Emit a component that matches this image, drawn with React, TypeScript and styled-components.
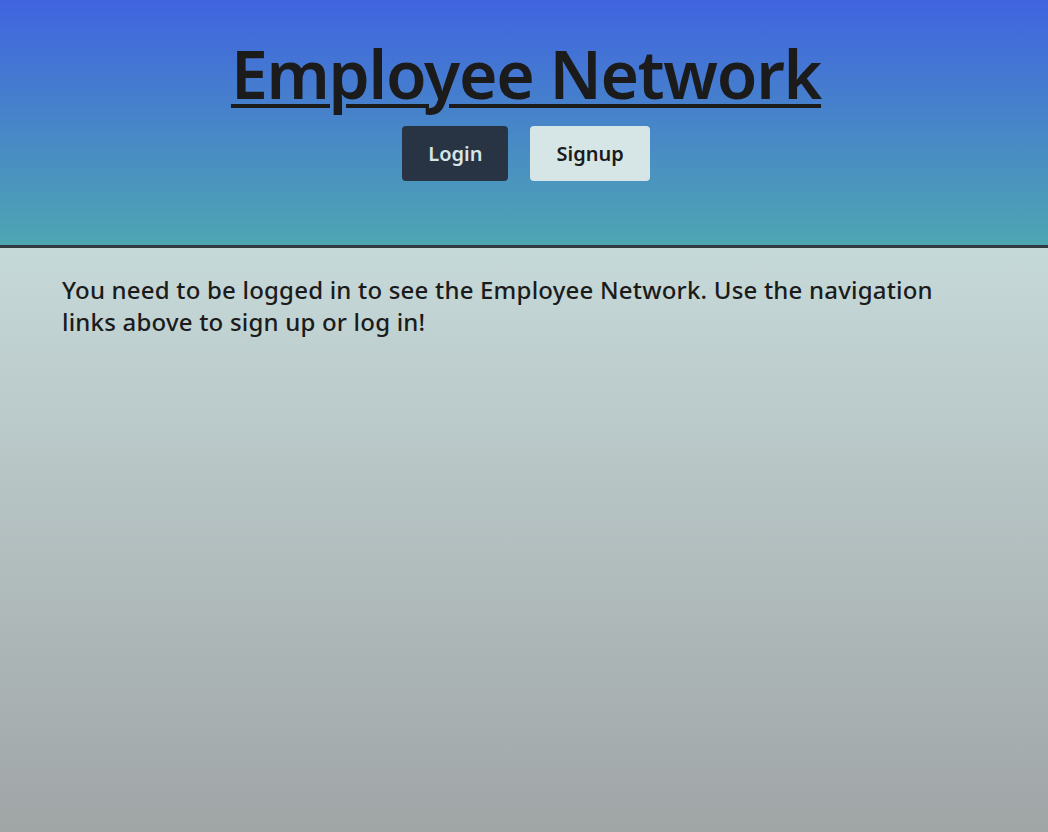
import React from "react";
import styled, { createGlobalStyle } from "styled-components";

const Global = createGlobalStyle`
  html, body { margin: 0; padding: 0; }
  body {
    font-family: "Noto Sans", "Open Sans", sans-serif;
    color: #1a1a1a;
  }
`;

const Page = styled.div`
  min-height: 832px;
  display: flex;
  flex-direction: column;
`;

const Header = styled.header`
  height: 248px;
  box-sizing: border-box;
  background: linear-gradient(180deg, #4064e0 0%, #4ea6b2 100%);
  border-bottom: 3px solid #333b42;
  display: flex;
  flex-direction: column;
  align-items: center;
  padding: 28px 0 0 4px;
`;

const Title = styled.a`
  font-size: 66px;
  font-weight: 600;
  color: #1b1b1b;
  text-decoration: underline;
  text-decoration-thickness: 4px;
  text-underline-offset: 5px;
  line-height: 90px;
  letter-spacing: -1.3px;
  cursor: pointer;
`;

const Nav = styled.nav`
  display: flex;
  gap: 22px;
  margin-top: 8px;
`;

const NavButton = styled.button<{ $dark?: boolean }>`
  height: 55px;
  padding: 0 26px;
  border: none;
  border-radius: 4px;
  font-family: "Noto Sans", sans-serif;
  font-size: 20px;
  font-weight: 600;
  background: ${(p) => (p.$dark ? "#283444" : "#d6e6e6")};
  color: ${(p) => (p.$dark ? "#d6e6e6" : "#1b1b1b")};
  cursor: pointer;
`;

const Main = styled.main`
  flex: 1;
  padding: 26px 62px;
  background: linear-gradient(180deg, #c6d9d9 0%, #a0a5a6 100%);
`;

const Message = styled.p`
  margin: 0;
  max-width: 900px;
  font-size: 24px;
  line-height: 32px;
  font-weight: 500;
  letter-spacing: 0.2px;
  color: #1b1b1b;
`;

export default function App() {
  return (
    <>
      <Global />
      <Page>
        <Header>
          <Title>Employee Network</Title>
          <Nav>
            <NavButton $dark>Login</NavButton>
            <NavButton>Signup</NavButton>
          </Nav>
        </Header>
        <Main>
          <Message>
            You need to be logged in to see the Employee Network. Use the
            navigation links above to sign up or log in!
          </Message>
        </Main>
      </Page>
    </>
  );
}
